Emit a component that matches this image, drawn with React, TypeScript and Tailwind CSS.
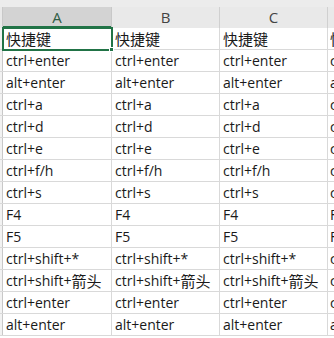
import React from "react";

const rows = [
  "快捷键",
  "ctrl+enter",
  "alt+enter",
  "ctrl+a",
  "ctrl+d",
  "ctrl+e",
  "ctrl+f/h",
  "ctrl+s",
  "F4",
  "F5",
  "ctrl+shift+*",
  "ctrl+shift+箭头",
  "ctrl+enter",
  "alt+enter",
];

const font = {
  fontFamily: '"Open Sans", "Noto Sans CJK SC", sans-serif',
};

// Chinese runs are set a touch larger than the Latin text around them
function CellText({ text }: { text: string }) {
  const parts = text.split(/([\u4e00-\u9fff]+)/).filter(Boolean);
  return (
    <>
      {parts.map((p, i) =>
        /[\u4e00-\u9fff]/.test(p) ? (
          <span
            key={i}
            className="text-[15px]"
            style={{ fontFamily: '"Noto Sans CJK SC", sans-serif' }}
          >
            {p}
          </span>
        ) : (
          <span key={i}>{p}</span>
        )
      )}
    </>
  );
}

export default function App() {
  return (
    <div
      className="w-[334px] h-[338px] overflow-hidden bg-white text-[#1a1a1a]"
      style={font}
    >
      {/* strip above the column headers */}
      <div className="h-[7px] bg-[#ececec]" />
      {/* column headers */}
      <div className="flex h-[21px] bg-[#e9e9e9] text-[15px] leading-none">
        <div className="w-[3px] shrink-0 border-r border-[#c8c8c8]" />
        <div className="relative w-[109px] shrink-0 bg-[#d3d3d3] border-r border-[#c8c8c8] flex items-center justify-center text-[#2f5d45]">
          A
          <div className="absolute left-0 right-0 bottom-0 h-[2px] bg-[#217346]" />
        </div>
        <div className="w-[108px] shrink-0 border-r border-[#d0d0d0] flex items-center justify-center text-[#444]">
          B
        </div>
        <div className="w-[108px] shrink-0 border-r border-[#d0d0d0] flex items-center justify-center text-[#444]">
          C
        </div>
        <div className="flex-1" />
      </div>
      {/* data rows */}
      <div className="relative">
        {rows.map((t, i) => (
          <div
            key={i}
            className="flex h-[22px] border-b border-[#d9d9d9] text-[14px] leading-none"
          >
            <div className="w-[3px] shrink-0 bg-[#f2f2f2] border-r border-[#c8c8c8]" />
            {[0, 1, 2, 3].map((c) => (
              <div
                key={c}
                className={
                  c === 3
                    ? "flex-1 flex items-center pl-[2px] overflow-hidden whitespace-nowrap"
                    : "w-[108px] shrink-0 flex items-center pl-[3px] border-r border-[#d9d9d9] overflow-hidden whitespace-nowrap" +
                      (c === 0 ? " w-[109px]" : "")
                }
              >
                <CellText text={t} />
              </div>
            ))}
          </div>
        ))}
        {/* active cell outline and fill handle */}
        <div className="absolute left-[2px] top-[-1px] w-[111px] h-[24px] border-2 border-[#217346]" />
        <div className="absolute left-[109px] top-[19px] w-[5px] h-[5px] bg-[#217346] border border-white" />
      </div>
    </div>
  );
}
